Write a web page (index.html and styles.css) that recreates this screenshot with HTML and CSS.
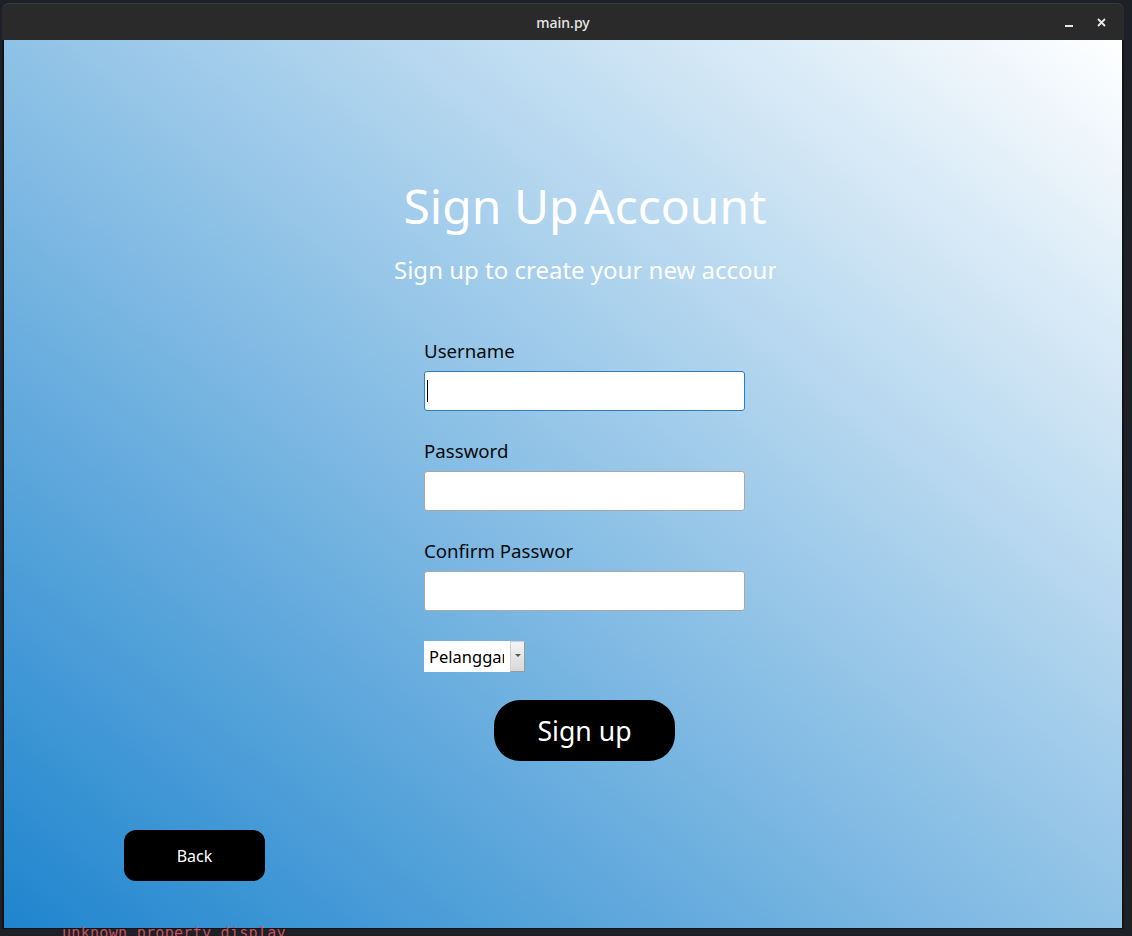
FILE: index.html
```html
<!DOCTYPE html>
<html>
<head>
<meta charset="utf-8">
<link rel="stylesheet" href="styles.css">
</head>
<body>
<div class="desktop">
  <div class="window">
    <div class="titlebar">
      <span class="title">main.py</span>
      <div class="controls">
        <span class="ctl-min"></span>
        <svg class="ctl-close" width="9" height="9" viewBox="0 0 9 9"><path d="M1 1 L8 8 M8 1 L1 8" stroke="#e6e6e6" stroke-width="1.8"/></svg>
      </div>
    </div>
    <div class="content">
      <div class="stage">
        <div class="heading">Sign Up<span class="tight"> </span>Account</div>
        <div class="subheading">Sign up to create your new account</div>
        <div class="form">
          <div class="label">Username</div>
          <div class="field focused"><span class="caret"></span></div>
          <div class="label gap">Password</div>
          <div class="field"></div>
          <div class="label gap">Confirm Passwor</div>
          <div class="field"></div>
          <div class="combo">
            <span class="combo-text">Pelanggan</span>
            <span class="combo-btn"><span class="arrow"></span></span>
          </div>
        </div>
        <div class="signup-row"><div class="btn-signup">Sign up</div></div>
      </div>
      <div class="back-row"><div class="btn-back">Back</div></div>
    </div>
  </div>
  <div class="editor-line">unknown property display</div>
</div>
</body>
</html>
```
FILE: styles.css
```css
html, body {
  margin: 0;
  padding: 0;
  background: #1e2027;
  overflow: hidden;
}
.desktop {
  width: 1132px;
  height: 936px;
  position: relative;
  font-family: "Noto Sans", "DejaVu Sans", sans-serif;
  background: #1e2027;
}
.window {
  margin: 3px 0 0 2px;
  width: 1122px;
  display: flex;
  flex-direction: column;
}
.titlebar {
  height: 37px;
  background: #2a2a2a;
  border-radius: 7px 7px 0 0;
  display: flex;
  align-items: center;
  justify-content: center;
  position: relative;
  box-shadow: inset 0 1px 0 #3a3a3a;
}
.title {
  color: #e8e8e8;
  font-size: 14px;
  font-weight: 500;
  margin-top: 1px;
}
.controls {
  position: absolute;
  right: 18px;
  top: 13px;
  display: flex;
  align-items: center;
  gap: 24px;
}
.ctl-min {
  width: 8px;
  height: 2px;
  background: #e6e6e6;
  margin-top: 9px;
}
.ctl-close {
  display: block;
  margin-top: 1px;
}
.content {
  height: 889px;
  border-left: 2px solid #141414;
  border-right: 2px solid #141414;
  border-bottom: 1px solid #141414;
  box-sizing: border-box;
  background: linear-gradient(to top right, #1f85ce 0%, #ffffff 100%);
  display: flex;
  flex-direction: column;
  overflow: hidden;
}
.stage {
  margin: 133px 0 0 390px;
  width: 382px;
  display: flex;
  flex-direction: column;
}
.heading {
  color: #ffffff;
  font-size: 48px;
  line-height: 65px;
  height: 65px;
  text-align: center;
  white-space: nowrap;
}
.tight {
  margin-left: -7px;
}
.subheading {
  margin-top: 15px;
  color: #ffffff;
  font-size: 24px;
  line-height: 33px;
  height: 33px;
  white-space: nowrap;
  overflow: hidden;
}
.form {
  margin: 52px 0 0 30px;
  width: 321px;
  display: flex;
  flex-direction: column;
}
.label {
  color: #0a0a0a;
  font-size: 18.67px;
  line-height: 26px;
  height: 26px;
  margin-bottom: 7px;
  white-space: nowrap;
}
.label.gap {
  margin-top: 27px;
}
.field {
  height: 40px;
  box-sizing: border-box;
  background: #ffffff;
  border: 1px solid #a8a8a8;
  border-radius: 3px;
  display: flex;
  align-items: center;
}
.field.focused {
  border-color: #2f7cbc;
}
.caret {
  width: 1px;
  height: 22px;
  background: #000;
  margin-left: 2px;
}
.combo {
  margin-top: 30px;
  width: 101px;
  height: 31px;
  display: flex;
  background: #ffffff;
}
.combo-text {
  flex: 1;
  overflow: hidden;
  white-space: nowrap;
  font-size: 16.5px;
  line-height: 31px;
  padding-left: 5px;
  margin-right: 6px;
  color: #000;
  width: 75px;
}
.combo-btn {
  width: 15px;
  box-sizing: border-box;
  border: 1px solid #9a9a9a;
  border-top-color: #d0d0d0;
  border-left-color: #d0d0d0;
  background: linear-gradient(#f4f4f4, #d8d8d8);
  display: flex;
  align-items: center;
  justify-content: center;
}
.arrow {
  width: 0;
  height: 0;
  border-left: 3px solid transparent;
  border-right: 3px solid transparent;
  border-top: 3px solid #555;
  margin-top: -2px;
}
.signup-row {
  margin-top: 28px;
  display: flex;
  padding-left: 100px;
}
.btn-signup {
  width: 181px;
  height: 61px;
  border-radius: 26px;
  background: #000;
  color: #fff;
  font-size: 26.67px;
  display: flex;
  align-items: center;
  justify-content: center;
  padding-bottom: 1px;
  box-sizing: border-box;
}
.back-row {
  margin: 69px 0 0 120px;
  display: flex;
}
.btn-back {
  width: 141px;
  height: 51px;
  border-radius: 12px;
  background: #000;
  color: #fff;
  font-size: 16px;
  display: flex;
  align-items: center;
  justify-content: center;
}
.editor-line {
  position: absolute;
  left: 62px;
  top: 925px;
  font-family: "DejaVu Sans Mono", monospace;
  font-size: 15px;
  line-height: 11px;
  height: 11px;
  color: #c8505a;
  letter-spacing: 0.3px;
}
```
